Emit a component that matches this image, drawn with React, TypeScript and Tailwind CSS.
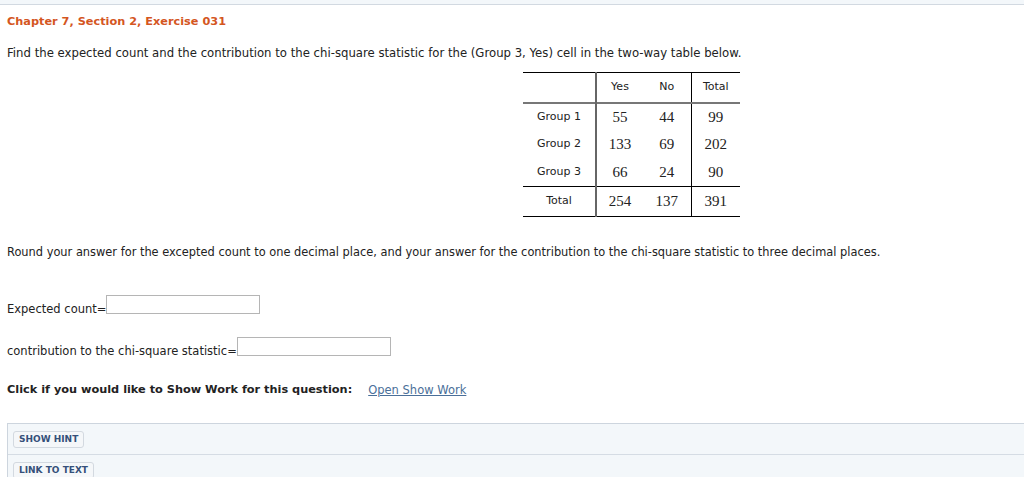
import React from 'react';

const ROWS = [
  { label: 'Group 1', yes: '55', no: '44', total: '99' },
  { label: 'Group 2', yes: '133', no: '69', total: '202' },
  { label: 'Group 3', yes: '66', no: '24', total: '90' },
];

const sans = "font-['DejaVu_Sans',Verdana,sans-serif]";
const serif = "font-['Liberation_Serif','Times_New_Roman',serif]";

export default function App() {
  return (
    <div className={`min-h-[477px] bg-white text-[11.5px] text-[#222] ${sans}`}>
      <div className="h-[5px] border-b border-[#d2d9e1] bg-[#f3f7fa]" />

      <div className="px-[7px]">
        <h1 className="mt-[10px] text-[11.3px] font-bold leading-[14px] text-[#d4561f]">
          Chapter 7, Section 2, Exercise 031
        </h1>

        <p className="mt-[17px] text-[11.7px] leading-[14px]">
          Find the expected count and the contribution to the chi-square statistic for the (Group 3, Yes) cell in the two-way table below.
        </p>

        <table className="ml-[516px] mt-[12px] border-collapse text-[11px]">
          <thead>
            <tr className="h-[30px] border-t border-b-2 border-t-black border-b-[#777]">
              <th className="w-[73px] border-r-2 border-r-[#666]" />
              <th className="w-[47px] text-center font-normal">Yes</th>
              <th className="w-[48px] border-r border-r-black text-center font-normal">No</th>
              <th className="w-[49px] text-center font-normal">Total</th>
            </tr>
          </thead>
          <tbody>
            {ROWS.map((row) => (
              <tr key={row.label} className="h-[28px]">
                <td className="border-r-2 border-r-[#666] text-center">{row.label}</td>
                <td className={`text-center text-[15px] ${serif}`}>{row.yes}</td>
                <td className={`border-r border-r-black text-center text-[15px] ${serif}`}>{row.no}</td>
                <td className={`text-center text-[15px] ${serif}`}>{row.total}</td>
              </tr>
            ))}
            <tr className="h-[30px] border-t border-b border-black">
              <td className="border-r-2 border-r-[#666] text-center">Total</td>
              <td className={`text-center text-[15px] ${serif}`}>254</td>
              <td className={`border-r border-r-black text-center text-[15px] ${serif}`}>137</td>
              <td className={`text-center text-[15px] ${serif}`}>391</td>
            </tr>
          </tbody>
        </table>

        <p className="mt-[28px] text-[11.4px] leading-[14px]">
          Round your answer for the excepted count to one decimal place, and your answer for the contribution to the chi-square statistic to three decimal places.
        </p>

        <div className="mt-[36px] flex items-center">
          <span>Expected count=</span>
          <input className="mb-[10px] h-[19px] w-[154px] border border-[#b5b5b5] bg-white" />
        </div>

        <div className="mt-[13px] flex items-center">
          <span>contribution to the chi-square statistic=</span>
          <input className="mb-[10px] h-[19px] w-[154px] border border-[#b5b5b5] bg-white" />
        </div>

        <div className="mt-[17px] flex items-center leading-[14px]">
          <span className="text-[11.3px] font-bold">Click if you would like to Show Work for this question:</span>
          <a href="#" className="ml-[16px] text-[#4a6f99] underline">
            Open Show Work
          </a>
        </div>
      </div>

      <div className="ml-[7px] mt-[26px] border-t border-l border-[#cdd5de] bg-[#f3f7fa]">
        <div className="border-b border-[#d5dce4] px-[5px] py-[6px]">
          <button className="rounded-[3px] border border-[#d3d9e0] bg-[#f5f7f9] px-[5px] py-[2px] text-[9px] font-bold leading-[11px] text-[#35507a]">
            SHOW HINT
          </button>
        </div>
        <div className="px-[5px] py-[6px]">
          <button className="rounded-[3px] border border-[#d3d9e0] bg-[#f5f7f9] px-[5px] py-[2px] text-[9px] font-bold leading-[11px] text-[#35507a]">
            LINK TO TEXT
          </button>
        </div>
      </div>
    </div>
  );
}
